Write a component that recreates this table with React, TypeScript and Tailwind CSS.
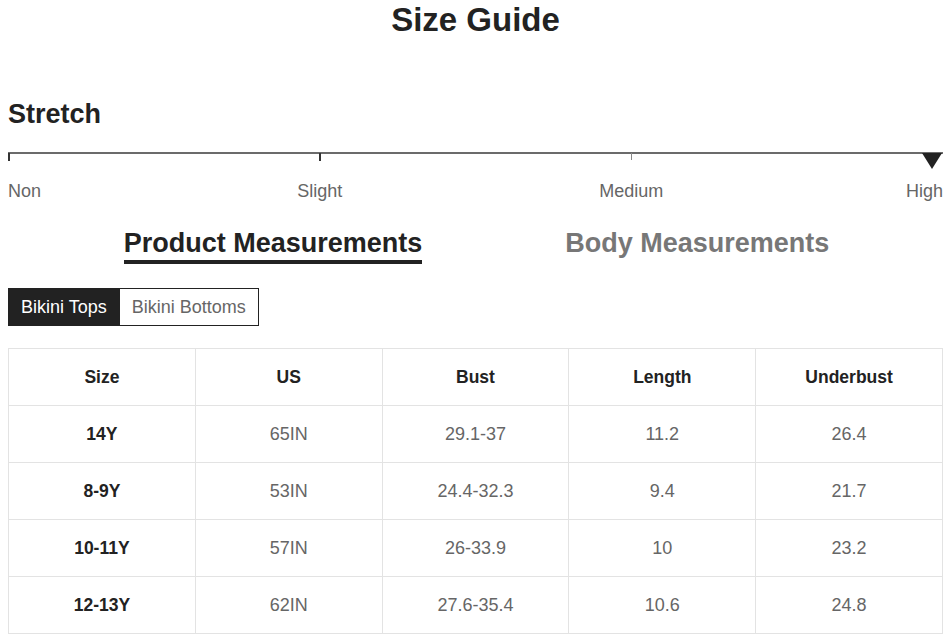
const headers = ["Size", "US", "Bust", "Length", "Underbust"];

const rows = [
  ["14Y", "65IN", "29.1-37", "11.2", "26.4"],
  ["8-9Y", "53IN", "24.4-32.3", "9.4", "21.7"],
  ["10-11Y", "57IN", "26-33.9", "10", "23.2"],
  ["12-13Y", "62IN", "27.6-35.4", "10.6", "24.8"],
];

const StretchScale = () => (
  <div className="mt-[22px]">
    <svg width="935" height="18" viewBox="0 0 935 18" className="block">
      <line x1="0" y1="1" x2="935" y2="1" stroke="#3a3a3a" strokeWidth="1.5" />
      <line x1="1" y1="1" x2="1" y2="9" stroke="#333" strokeWidth="2" />
      <line x1="312" y1="1" x2="312" y2="9" stroke="#333" strokeWidth="2" />
      <line x1="623.5" y1="1" x2="623.5" y2="8" stroke="#888" strokeWidth="1" />
      <polygon points="914,1 934,1 924,17" fill="#222" />
    </svg>
    <div className="grid grid-cols-6 mt-[11px] text-[18px] leading-5 text-[#666]">
      <span className="text-left">Non</span>
      <span className="col-span-2 text-center">Slight</span>
      <span className="col-span-2 text-center">Medium</span>
      <span className="text-right">High</span>
    </div>
  </div>
);

export default function App() {
  return (
    <div
      className="w-[947px] h-[637px] bg-white pl-2 pr-1 overflow-hidden"
      style={{ fontFamily: '"Liberation Sans", Arial, sans-serif' }}
    >
      <h1 className="text-center text-[33px] leading-none font-bold text-[#222] pt-[3px]">
        Size Guide
      </h1>

      <h2 className="mt-[62px] text-[27px] leading-8 font-bold text-[#222]">Stretch</h2>

      <StretchScale />

      {/* measurement tabs */}
      <div className="flex justify-center gap-[143px] mt-[26px] pl-[2px]">
        <div className="flex flex-col items-center">
          <span className="text-[27px] leading-8 font-bold text-[#222]">Product Measurements</span>
          <span className="h-[4px] w-full bg-[#222] mt-[1px]" />
        </div>
        <span className="text-[27px] leading-8 font-bold text-[#777]">Body Measurements</span>
      </div>

      <div className="flex mt-[24px] h-[38px] text-[18px]">
        <button className="px-[12px] bg-[#222] text-white border border-[#222]">Bikini Tops</button>
        <button className="px-[12px] bg-white text-[#666] border border-[#222] border-l-0">Bikini Bottoms</button>
      </div>

      <table className="mt-[22px] w-[935px] table-fixed border-collapse text-[18px]">
        <thead>
          <tr className="h-[57px]">
            {headers.map((h) => (
              <th key={h} className="border border-[#e3e3e3] font-bold text-[#222] text-center text-[17.5px]">
                {h}
              </th>
            ))}
          </tr>
        </thead>
        <tbody>
          {rows.map((r) => (
            <tr key={r[0]} className="h-[57px]">
              {r.map((c, i) => (
                <td
                  key={i}
                  className={
                    i === 0
                      ? "border border-[#e3e3e3] text-center font-bold text-[#222] text-[17.5px]"
                      : "border border-[#e3e3e3] text-center text-[#666]"
                  }
                >
                  {c}
                </td>
              ))}
            </tr>
          ))}
        </tbody>
      </table>
    </div>
  );
}
